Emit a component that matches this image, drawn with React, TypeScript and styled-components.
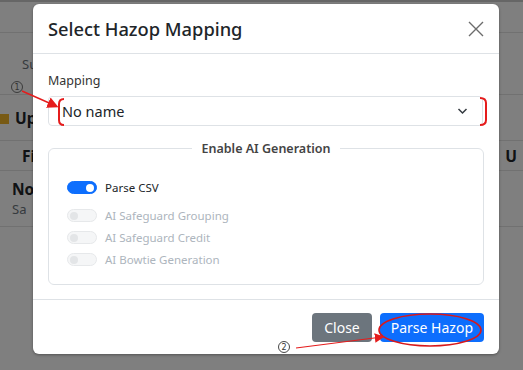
import React from 'react';
import styled, { createGlobalStyle } from 'styled-components';

const GlobalStyle = createGlobalStyle`
  html, body {
    margin: 0;
    padding: 0;
    background: #fff;
  }
  body {
    font-family: "Noto Sans", "Open Sans", Arial, sans-serif;
    color: #212529;
  }
`;

const Screen = styled.div`
  position: relative;
  width: 523px;
  height: 370px;
  overflow: hidden;
  background: #fff;
`;

// ---- page behind the dialog ----

const BackPage = styled.div`
  display: flex;
  flex-direction: column;
  font-size: 15px;
`;

const BackRow = styled.div<{ h: number; line?: boolean }>`
  display: flex;
  align-items: center;
  justify-content: space-between;
  height: ${(p) => p.h}px;
  border-bottom: ${(p) => (p.line ? '1px solid #e3e3e3' : 'none')};
  padding: 0 6px 0 22px;
  box-sizing: border-box;
`;

const Muted = styled.span`
  color: #6c757d;
  font-size: 13px;
`;

const Strong = styled.span`
  font-weight: 700;
  font-size: 15.5px;
`;

const Folder = styled.span`
  display: inline-block;
  width: 9px;
  height: 10px;
  background: #f0b429;
  margin: 0 6px 0 -22px;
`;

const Cell = styled.div`
  display: flex;
  flex-direction: column;
  margin-left: -10px;
  line-height: 20px;
`;

const Backdrop = styled.div`
  position: absolute;
  inset: 0;
  background: rgba(0, 0, 0, 0.5);
  border-top: 2px solid #666;
`;

// ---- dialog ----

const Dialog = styled.div`
  position: absolute;
  left: 33px;
  top: 4px;
  width: 466px;
  height: 350px;
  background: #fff;
  border-radius: 6px;
  box-shadow: 0 1px 3px rgba(0, 0, 0, 0.35);
  display: flex;
  flex-direction: column;
  overflow: hidden;
`;

const Header = styled.div`
  display: flex;
  align-items: center;
  justify-content: space-between;
  height: 49px;
  padding: 0 14px 0 15px;
  border-bottom: 1px solid #dee2e6;
`;

const Title = styled.h5`
  margin: 0;
  font-size: 18.3px;
  font-weight: 500;
  color: #212529;
`;

const CloseX = styled.button`
  border: 0;
  background: none;
  padding: 0;
  width: 18px;
  height: 18px;
  color: #6c6c6c;
  display: flex;
`;

const Body = styled.div`
  flex: 1;
  padding: 17px 15px 14px;
  display: flex;
  flex-direction: column;
`;

const Label = styled.label`
  font-size: 12.5px;
  color: #333;
  line-height: 20px;
  margin-bottom: 5px;
`;

const Select = styled.div`
  display: flex;
  align-items: center;
  justify-content: space-between;
  height: 30px;
  box-sizing: border-box;
  border: 1px solid #dee2e6;
  border-radius: 4px;
  padding: 0 14px 0 13px;
  font-size: 14.5px;
  color: #212529;
  margin-right: 1px;
`;

const Fieldset = styled.fieldset`
  flex: 1;
  margin: 14px 0 0;
  border: 1px solid #dee2e6;
  border-radius: 6px;
  padding: 24px 18px 0;
  display: flex;
  flex-direction: column;
  gap: 9px;
  min-width: 0;
`;

const Legend = styled.legend`
  margin: 0 auto;
  padding: 0 10px;
  font-size: 12.5px;
  font-weight: 600;
  color: #444;
`;

const SwitchRow = styled.div<{ first?: boolean }>`
  display: flex;
  align-items: center;
  gap: 8px;
  height: 13px;
  margin-bottom: ${(p) => (p.first ? '6px' : '0')};
  font-size: 11.5px;
  color: ${(p) => (p.first ? '#212529' : '#adb5bd')};
`;

const Track = styled.span<{ on?: boolean }>`
  position: relative;
  width: 30px;
  height: 13px;
  box-sizing: border-box;
  border-radius: 7px;
  background: ${(p) => (p.on ? '#0d6efd' : '#f5f6f7')};
  border: 1px solid ${(p) => (p.on ? '#0d6efd' : '#e6e8ea')};
`;

const Knob = styled.span<{ on?: boolean }>`
  position: absolute;
  top: 1.5px;
  left: ${(p) => (p.on ? '18px' : '2px')};
  width: 8px;
  height: 8px;
  border-radius: 50%;
  background: ${(p) => (p.on ? '#fff' : '#e3e5e7')};
`;

const Footer = styled.div`
  display: flex;
  justify-content: flex-end;
  gap: 8px;
  padding: 13px 15px 12px;
  border-top: 1px solid #dee2e6;
`;

const Btn = styled.button<{ variant: 'secondary' | 'primary' }>`
  height: 29px;
  border: 0;
  border-radius: 4px;
  color: #fff;
  font-family: inherit;
  font-size: 14px;
  padding: ${(p) => (p.variant === 'primary' ? '0 11px' : '0 12px')};
  background: ${(p) => (p.variant === 'primary' ? '#0d6efd' : '#6c757d')};
`;

const Marks = styled.svg`
  position: absolute;
  inset: 0;
  pointer-events: none;
`;

const switches = [
  { label: 'Parse CSV', on: true },
  { label: 'AI Safeguard Grouping', on: false },
  { label: 'AI Safeguard Credit', on: false },
  { label: 'AI Bowtie Generation', on: false },
];

export default function App() {
  return (
    <Screen>
      <GlobalStyle />
      <BackPage>
        <BackRow h={33} line />
        <BackRow h={62} line>
          <Muted>Su</Muted>
        </BackRow>
        <BackRow h={46} line>
          <Strong><Folder />Up</Strong>
        </BackRow>
        <BackRow h={30} line>
          <Strong>Fi</Strong>
          <Strong>U</Strong>
        </BackRow>
        <BackRow h={56} line>
          <Cell>
            <Strong>No</Strong>
            <Muted>Sa</Muted>
          </Cell>
        </BackRow>
      </BackPage>
      <Backdrop />

      <Dialog>
        <Header>
          <Title>Select Hazop Mapping</Title>
          <CloseX aria-label="Close">
            <svg width="18" height="18" viewBox="0 0 18 18">
              <path d="M2 2 L16 16 M16 2 L2 16" stroke="currentColor" strokeWidth="1.4" />
            </svg>
          </CloseX>
        </Header>
        <Body>
          <Label>Mapping</Label>
          <Select>
            <span>No name</span>
            <svg width="11" height="8" viewBox="0 0 11 8">
              <path d="M1.5 2 L5.5 6 L9.5 2" fill="none" stroke="#343a40" strokeWidth="1.5" />
            </svg>
          </Select>
          <Fieldset>
            <Legend>Enable AI Generation</Legend>
            {switches.map((s, i) => (
              <SwitchRow key={s.label} first={i === 0}>
                <Track on={s.on}><Knob on={s.on} /></Track>
                {s.label}
              </SwitchRow>
            ))}
          </Fieldset>
        </Body>
        <Footer>
          <Btn variant="secondary">Close</Btn>
          <Btn variant="primary">Parse Hazop</Btn>
        </Footer>
      </Dialog>

      <Marks width="523" height="370" viewBox="0 0 523 370">
        <defs>
          <marker id="head" markerWidth="8" markerHeight="8" refX="6" refY="4" orient="auto">
            <path d="M0 0 L8 4 L0 8 Z" fill="#e51c1c" />
          </marker>
        </defs>
        <circle cx="17" cy="87" r="5.5" fill="none" stroke="#333" strokeWidth="0.9" />
        <text x="17" y="90" fontSize="8" textAnchor="middle" fill="#333" fontFamily="DejaVu Sans">1</text>
        <path d="M22 91 L56 106" stroke="#e51c1c" strokeWidth="1.4" markerEnd="url(#head)" />
        <path d="M64 99 Q59 99 59 104 L59 120 Q59 125 64 125" fill="none" stroke="#e51c1c" strokeWidth="2" />
        <path d="M480 98 Q486 98 486 103 L486 120 Q486 125 480 125" fill="none" stroke="#e51c1c" strokeWidth="2" />
        <ellipse cx="430" cy="330" rx="51" ry="16" fill="none" stroke="#d7191c" strokeWidth="1.6" />
        <circle cx="284" cy="347" r="5.5" fill="none" stroke="#333" strokeWidth="0.9" />
        <text x="284" y="350" fontSize="8" textAnchor="middle" fill="#333" fontFamily="DejaVu Sans">2</text>
        <path d="M296 348 L382 337" stroke="#e51c1c" strokeWidth="1.2" markerEnd="url(#head)" />
      </Marks>
    </Screen>
  );
}
